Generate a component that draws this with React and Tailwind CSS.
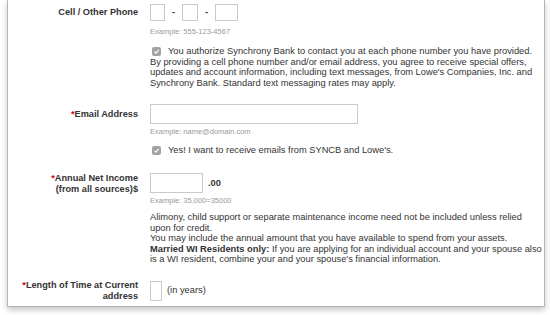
const Check = () => (
  <span className="ml-[2px] inline-flex h-[9px] w-[9px] shrink-0 items-center justify-center rounded-[2px] bg-[#a3a3a3]">
    <svg viewBox="0 0 10 10" className="h-[7px] w-[7px]">
      <path d="M2 5.3l2.1 2.1L8.2 2.8" stroke="#fff" strokeWidth="1.6" fill="none" />
    </svg>
  </span>
);

const Req = () => <span className="text-[#d0021b]">*</span>;

const Label = ({ children, className = '' }) => (
  <div className={`w-[130px] shrink-0 text-right text-[9.2px] font-bold text-[#333] ${className}`}>
    {children}
  </div>
);

const Box = ({ className = '' }) => (
  <div className={`border border-[#cacaca] bg-white ${className}`} />
);

const Example = ({ children, className = '' }) => (
  <div className={`text-[7.5px] leading-[10px] text-[#9a9a9a] ${className}`}>{children}</div>
);

export default function App() {
  return (
    <div className="h-[315px] w-[550px] overflow-hidden bg-white font-['Liberation_Sans',Arial,sans-serif] text-[9.3px] leading-[10.6px] text-[#333]">
      <div className="ml-[7px] w-[538px] border-x border-b border-[#b5b5b5] bg-white pb-[5px] shadow-[0_3px_6px_rgba(0,0,0,0.22)]">
        {/* Cell phone */}
        <div className="flex gap-[12px] pt-[4px]">
          <Label className="leading-[17px]">Cell / Other Phone</Label>
          <div>
            <div className="flex items-center">
              <Box className="h-[17px] w-[15px]" />
              <span className="w-[17px] text-center font-bold">-</span>
              <Box className="h-[17px] w-[16px]" />
              <span className="w-[17px] text-center font-bold">-</span>
              <Box className="h-[17px] w-[23px]" />
            </div>
            <Example className="mt-[6px]">Example: 555-123-4567</Example>
            <div className="mt-[9px] flex items-center gap-[7px]">
              <Check />
              <span className="whitespace-nowrap">
                You authorize Synchrony Bank to contact you at each phone number you have provided.
              </span>
            </div>
            <p className="whitespace-nowrap">
              By providing a cell phone number and/or email address, you agree to receive special offers,
              <br />
              updates and account information, including text messages, from Lowe's Companies, Inc. and
              <br />
              Synchrony Bank. Standard text messaging rates may apply.
            </p>
          </div>
        </div>

        {/* Email */}
        <div className="mt-[16px] flex gap-[12px]">
          <Label className="leading-[20px]">
            <Req />
            Email Address
          </Label>
          <div>
            <Box className="h-[20px] w-[208px]" />
            <Example className="mt-[3px]">Example: name@domain.com</Example>
            <div className="mt-[8px] flex items-center gap-[7px]">
              <Check />
              <span>Yes! I want to receive emails from SYNCB and Lowe's.</span>
            </div>
          </div>
        </div>

        {/* Income */}
        <div className="mt-[17px] flex gap-[12px]">
          <Label className="leading-[10.6px]">
            <Req />
            Annual Net Income
            <br />
            (from all sources)$
          </Label>
          <div>
            <div className="flex items-center">
              <Box className="h-[20px] w-[53px]" />
              <span className="ml-[5px] font-bold">.00</span>
            </div>
            <Example className="mt-[3px]">Example: 35,000=35000</Example>
            <p className="mt-[6px] whitespace-nowrap">
              Alimony, child support or separate maintenance income need not be included unless relied
              <br />
              upon for credit.
              <br />
              You may include the annual amount that you have available to spend from your assets.
              <br />
              <b>Married WI Residents only:</b> If you are applying for an individual account and your spouse also
              <br />
              is a WI resident, combine your and your spouse's financial information.
            </p>
          </div>
        </div>

        {/* Length of time */}
        <div className="mt-[15px] flex gap-[12px]">
          <Label className="leading-[10.6px]">
            <Req />
            Length of Time at Current
            <br />
            address
          </Label>
          <div className="flex items-center">
            <Box className="h-[20px] w-[12px]" />
            <span className="ml-[5px]">(in years)</span>
          </div>
        </div>
      </div>
    </div>
  );
}
